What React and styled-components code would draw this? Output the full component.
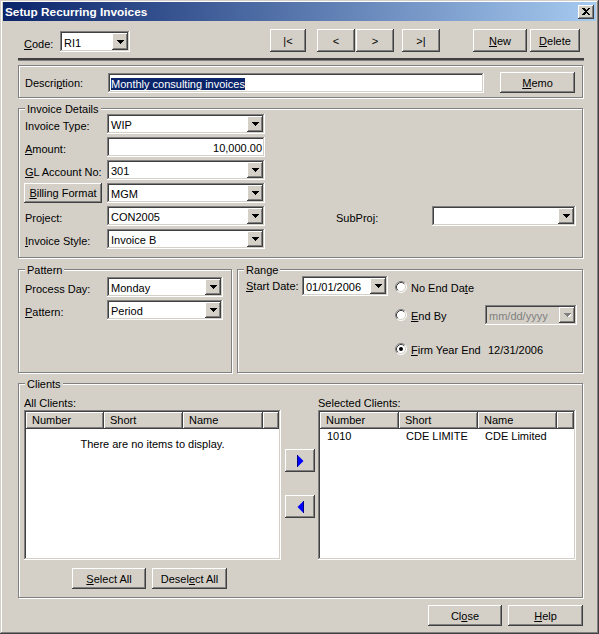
import React from "react";
import styled, { createGlobalStyle, css } from "styled-components";

const GlobalStyle = createGlobalStyle`
  html, body { margin: 0; padding: 0; background: #d4d0c8; }
  body { font-family: "Liberation Sans", Arial, sans-serif; font-size: 11px; color: #000; }
  * { box-sizing: border-box; }
`;

const raised = css`
  box-shadow: inset -1px -1px #404040, inset 1px 1px #fff, inset -2px -2px #808080, inset 2px 2px #d4d0c8;
`;
const sunken = css`
  box-shadow: inset -1px -1px #fff, inset 1px 1px #808080, inset -2px -2px #d4d0c8, inset 2px 2px #404040;
`;
const etched = css`
  border: 1px solid #808080;
  box-shadow: inset 1px 1px #fff, 1px 1px #fff;
`;

const Window = styled.div`
  width: 599px;
  height: 634px;
  padding: 2px 3px;
  background: #d4d0c8;
  box-shadow: inset -1px -1px #404040, inset 1px 1px #d4d0c8, inset -2px -2px #808080, inset 2px 2px #fff;
`;

const TitleBar = styled.div`
  display: flex;
  align-items: center;
  height: 19px;
  padding: 0 2px;
  background: linear-gradient(to right, #0a246a, #a6caf0);
  color: #fff;
  font-weight: bold;
  font-size: 11.8px;
`;

const CloseBtn = styled.div`
  margin-left: auto;
  width: 16px;
  height: 14px;
  display: flex;
  align-items: center;
  justify-content: center;
  background: #d4d0c8;
  ${raised};
`;

const Body = styled.div`
  padding: 0 12px 0 15px;
  display: flex;
  flex-direction: column;
`;

const TopRow = styled.div`
  display: flex;
  align-items: flex-end;
  height: 24px;
  margin-top: 7px;
`;

const Separator = styled.div`
  margin-top: 6px;
  height: 3px;
  border-top: 2px solid #404040;
  border-bottom: 1px solid #808080;
  width: 566px;
`;

const Label = styled.div`
  flex: none;
  width: ${(p) => p.$w}px;
  height: 100%;
  margin-left: ${(p) => p.$ml || 0}px;
  padding-top: ${(p) => (p.$flat ? 0 : 4)}px;
  display: flex;
  align-items: center;
  white-space: nowrap;
`;

const Button = styled.div`
  flex: none;
  width: ${(p) => p.$w}px;
  height: ${(p) => p.$h || 23}px;
  margin-left: ${(p) => p.$ml || 0}px;
  display: flex;
  align-items: center;
  justify-content: center;
  background: #d4d0c8;
  white-space: nowrap;
  ${raised};
`;

const TextField = styled.div`
  flex: none;
  width: ${(p) => p.$w}px;
  height: 20px;
  padding: 2px 3px 0;
  display: flex;
  align-items: center;
  justify-content: ${(p) => (p.$right ? "flex-end" : "flex-start")};
  background: #fff;
  white-space: nowrap;
  ${sunken};
`;

const Selected = styled.span`
  background: #0a246a;
  color: #fff;
`;

const ComboBox = styled.div`
  flex: none;
  display: flex;
  width: ${(p) => p.$w}px;
  height: ${(p) => p.$h || 20}px;
  margin-left: ${(p) => p.$ml || 0}px;
  padding: 2px;
  background: ${(p) => (p.$disabled ? "#d4d0c8" : "#fff")};
  ${sunken};
`;

const ComboText = styled.div`
  flex: 1;
  padding: 2px 0 0 2px;
  display: flex;
  align-items: center;
  white-space: nowrap;
  overflow: hidden;
  color: ${(p) => (p.$disabled ? "#808080" : "#000")};
`;

const DropBtn = styled.div`
  flex: none;
  width: 16px;
  display: flex;
  align-items: center;
  justify-content: center;
  background: #d4d0c8;
  ${raised};
`;

const DescBox = styled.div`
  margin-top: 4px;
  width: 565px;
  height: 33px;
  display: flex;
  align-items: center;
  padding: 2px 0 0 6px;
  ${etched};
`;

const Group = styled.div`
  position: relative;
  width: ${(p) => (p.$w ? `${p.$w}px` : "auto")};
  flex: ${(p) => (p.$w ? "none" : "1")};
  height: ${(p) => p.$h}px;
  ${etched};
`;

const Caption = styled.div`
  position: absolute;
  top: -6px;
  left: 6px;
  padding: 0 2px 0 2px;
  line-height: 13px;
  background: #d4d0c8;
`;

const InvoiceGroup = styled(Group)`
  margin-top: 10px;
  padding: 5px 0 0 6px;
  display: flex;
  flex-direction: column;
  gap: 3px;
`;

const Row = styled.div`
  display: flex;
  align-items: center;
  height: 20px;
  margin-top: ${(p) => p.$mt || 0}px;
`;

const PanelsRow = styled.div`
  display: flex;
  gap: 5px;
  margin-top: 11px;
  width: 565px;
`;

const PatternGroup = styled(Group)`
  padding: 7px 0 0 6px;
  display: flex;
  flex-direction: column;
  gap: 3px;
`;

const RangeGroup = styled(Group)`
  padding: 6px 0 0 8px;
  display: flex;
  align-items: flex-start;
`;

const RadioColumn = styled.div`
  margin-left: 7px;
  display: flex;
  flex-direction: column;
`;

const RadioText = styled.span`
  width: ${(p) => p.$w}px;
  padding-top: 1px;
  white-space: nowrap;
`;

const ClientsGroup = styled(Group)`
  margin-top: 10px;
  padding: 11px 0 0 5px;
  display: flex;
  align-items: flex-start;
`;

const ListColumn = styled.div`
  width: ${(p) => p.$w}px;
  margin-left: ${(p) => p.$ml || 0}px;
  display: flex;
  flex-direction: column;
`;

const ListLabel = styled.div`
  height: 15px;
  line-height: 16px;
`;

const ListView = styled.div`
  height: 150px;
  padding: 2px;
  background: #fff;
  ${sunken};
`;

const ListHeader = styled.div`
  display: flex;
  height: 17px;
`;

const HeaderCell = styled.div`
  flex: ${(p) => (p.$w ? "none" : "1")};
  width: ${(p) => (p.$w ? `${p.$w}px` : "auto")};
  padding-left: 6px;
  line-height: 17px;
  background: #d4d0c8;
  ${raised};
`;

const ListRow = styled.div`
  display: flex;
  height: 14px;
  line-height: 14px;
  padding-left: 1px;
`;

const ListCell = styled.div`
  width: ${(p) => p.$w}px;
  padding-left: 6px;
  white-space: nowrap;
  overflow: hidden;
`;

const EmptyText = styled.div`
  margin-top: 8px;
  text-align: center;
  line-height: 14px;
`;

const MoveColumn = styled.div`
  margin-left: 4px;
  padding-top: 54px;
  display: flex;
  flex-direction: column;
  gap: 23px;
`;

const ButtonRow = styled.div`
  display: flex;
  gap: 6px;
  margin-top: 8px;
  padding-left: 48px;
`;

const BottomRow = styled.div`
  display: flex;
  justify-content: flex-end;
  gap: 6px;
  margin-top: 7px;
  width: 566px;
  padding-right: 1px;
`;

const DownArrow = ({ disabled }) => (
  <svg width="7" height="4" viewBox="0 0 7 4" shapeRendering="crispEdges">
    {disabled && <path d="M1 1h7L4.5 5z" fill="#fff" />}
    <path d="M0 0h7L3.5 4z" fill={disabled ? "#808080" : "#000"} />
  </svg>
);

const Combo = ({ w, h, ml, value, disabled }) => (
  <ComboBox $w={w} $h={h} $ml={ml} $disabled={disabled}>
    <ComboText $disabled={disabled}>{value}</ComboText>
    <DropBtn>
      <DownArrow disabled={disabled} />
    </DropBtn>
  </ComboBox>
);

const Radio = ({ checked }) => (
  <svg width="12" height="12" viewBox="0 0 12 12" style={{ marginRight: 4, flex: "none" }}>
    <circle cx="6" cy="6" r="5" fill="#fff" />
    <path d="M9.89 2.11A5.5 5.5 0 0 0 2.11 9.89" stroke="#808080" fill="none" />
    <path d="M2.11 9.89A5.5 5.5 0 0 0 9.89 2.11" stroke="#fff" fill="none" />
    <path d="M9.18 2.82A4.5 4.5 0 0 0 2.82 9.18" stroke="#404040" fill="none" />
    <path d="M2.82 9.18A4.5 4.5 0 0 0 9.18 2.82" stroke="#d4d0c8" fill="none" />
    {checked && <circle cx="6" cy="6" r="2" fill="#000" />}
  </svg>
);

const MoveArrow = ({ left }) => (
  <svg width="7" height="12" viewBox="0 0 7 12">
    {left ? (
      <>
        <path d="M6 0.5V11.5L0.5 6z" fill="#0000ff" />
        <path d="M6.5 0V12" stroke="#000080" />
      </>
    ) : (
      <>
        <path d="M1 0.5V11.5L6.5 6z" fill="#0000ff" />
        <path d="M0.5 0V12" stroke="#000080" />
      </>
    )}
  </svg>
);

const CloseGlyph = () => (
  <svg width="8" height="7" viewBox="0 0 8 7" shapeRendering="crispEdges">
    <path d="M0 0h2l2 2 2-2h2L5 3.5 8 7H6L4 5 2 7H0l3-3.5z" fill="#000" />
  </svg>
);

export default function App() {
  return (
    <>
      <GlobalStyle />
      <Window>
        <TitleBar>
          <span>Setup Recurring Invoices</span>
          <CloseBtn>
            <CloseGlyph />
          </CloseBtn>
        </TitleBar>
        <Body>
          <TopRow>
            <Label $w={36} $ml={6} style={{ height: 21 }}>
              <span>
                <u>C</u>ode:
              </span>
            </Label>
            <Combo w={70} h={21} value="RI1" />
            <Button $w={36} $ml={140}>|&lt;</Button>
            <Button $w={38} $ml={11}>&lt;</Button>
            <Button $w={38} $ml={1}>&gt;</Button>
            <Button $w={38} $ml={8}>&gt;|</Button>
            <Button $w={54} $ml={33}>
              <span>
                <u>N</u>ew
              </span>
            </Button>
            <Button $w={50} $ml={3}>
              <span>
                <u>D</u>elete
              </span>
            </Button>
          </TopRow>
          <Separator />
          <DescBox>
            <Label $w={83} $flat>
              <span>
                Descri<u>p</u>tion:
              </span>
            </Label>
            <TextField $w={376}>
              <Selected>Monthly consulting invoices</Selected>
            </TextField>
            <Button $w={75} $h={21} $ml={16}>
              <span>
                <u>M</u>emo
              </span>
            </Button>
          </DescBox>

          <InvoiceGroup $w={565} $h={150}>
            <Caption>Invoice Details</Caption>
            <Row>
              <Label $w={82}>Invoice Type:</Label>
              <Combo w={158} value="WIP" />
            </Row>
            <Row>
              <Label $w={82}>
                <span>
                  <u>A</u>mount:
                </span>
              </Label>
              <TextField $w={158} $right>
                10,000.00
              </TextField>
            </Row>
            <Row>
              <Label $w={82}>
                <span>
                  <u>G</u>L Account No:
                </span>
              </Label>
              <Combo w={158} value="301" />
            </Row>
            <Row>
              <Label $w={83} $ml={-1} $flat>
                <Button $w={78} $h={20}>
                  <span>
                    <u>B</u>illing Format
                  </span>
                </Button>
              </Label>
              <Combo w={158} value="MGM" />
            </Row>
            <Row>
              <Label $w={82}>Project:</Label>
              <Combo w={158} value="CON2005" />
              <Label $w={96} $ml={71}>
                SubProj:
              </Label>
              <Combo w={144} value="" />
            </Row>
            <Row>
              <Label $w={82}>
                <span>
                  <u>I</u>nvoice Style:
                </span>
              </Label>
              <Combo w={158} value="Invoice B" />
            </Row>
          </InvoiceGroup>

          <PanelsRow>
            <PatternGroup $w={214} $h={104}>
              <Caption>Pattern</Caption>
              <Row>
                <Label $w={82}>Process Day:</Label>
                <Combo w={116} value="Monday" />
              </Row>
              <Row>
                <Label $w={82}>
                  <span>
                    <u>P</u>attern:
                  </span>
                </Label>
                <Combo w={116} value="Period" />
              </Row>
            </PatternGroup>
            <RangeGroup $h={104}>
              <Caption>Range</Caption>
              <Row>
                <Label $w={56} $flat>
                  <span>
                    <u>S</u>tart Date:
                  </span>
                </Label>
                <Combo w={86} value="01/01/2006" />
              </Row>
              <RadioColumn>
                <Row $mt={1}>
                  <Radio />
                  <RadioText $w={80}>
                    No End Da<u>t</u>e
                  </RadioText>
                </Row>
                <Row $mt={8}>
                  <Radio />
                  <RadioText $w={74}>
                    <u>E</u>nd By
                  </RadioText>
                  <Combo w={92} value="mm/dd/yyyy" disabled />
                </Row>
                <Row $mt={14}>
                  <Radio checked />
                  <RadioText $w={77}>
                    <u>F</u>irm Year End
                  </RadioText>
                  <RadioText $w={60}>12/31/2006</RadioText>
                </Row>
              </RadioColumn>
            </RangeGroup>
          </PanelsRow>

          <ClientsGroup $w={565} $h={215}>
            <Caption>Clients</Caption>
            <ListColumn $w={257}>
              <ListLabel>All Clients:</ListLabel>
              <ListView>
                <ListHeader>
                  <HeaderCell $w={78}>Number</HeaderCell>
                  <HeaderCell $w={79}>Short</HeaderCell>
                  <HeaderCell $w={80}>Name</HeaderCell>
                  <HeaderCell />
                </ListHeader>
                <EmptyText>There are no items to display.</EmptyText>
              </ListView>
              <ButtonRow>
                <Button $w={74} $h={21}>
                  <span>
                    <u>S</u>elect All
                  </span>
                </Button>
                <Button $w={75} $h={21}>
                  <span>
                    Desel<u>e</u>ct All
                  </span>
                </Button>
              </ButtonRow>
            </ListColumn>
            <MoveColumn>
              <Button $w={30} $h={23}>
                <MoveArrow />
              </Button>
              <Button $w={30} $h={23}>
                <MoveArrow left />
              </Button>
            </MoveColumn>
            <ListColumn $w={258} $ml={3}>
              <ListLabel>Selected Clients:</ListLabel>
              <ListView>
                <ListHeader>
                  <HeaderCell $w={79}>Number</HeaderCell>
                  <HeaderCell $w={79}>Short</HeaderCell>
                  <HeaderCell $w={79}>Name</HeaderCell>
                  <HeaderCell />
                </ListHeader>
                <ListRow>
                  <ListCell $w={79}>1010</ListCell>
                  <ListCell $w={79}>CDE LIMITE</ListCell>
                  <ListCell $w={79}>CDE Limited</ListCell>
                </ListRow>
              </ListView>
            </ListColumn>
          </ClientsGroup>

          <BottomRow>
            <Button $w={74} $h={21}>
              <span>
                Cl<u>o</u>se
              </span>
            </Button>
            <Button $w={75} $h={21}>
              <span>
                <u>H</u>elp
              </span>
            </Button>
          </BottomRow>
        </Body>
      </Window>
    </>
  );
}
